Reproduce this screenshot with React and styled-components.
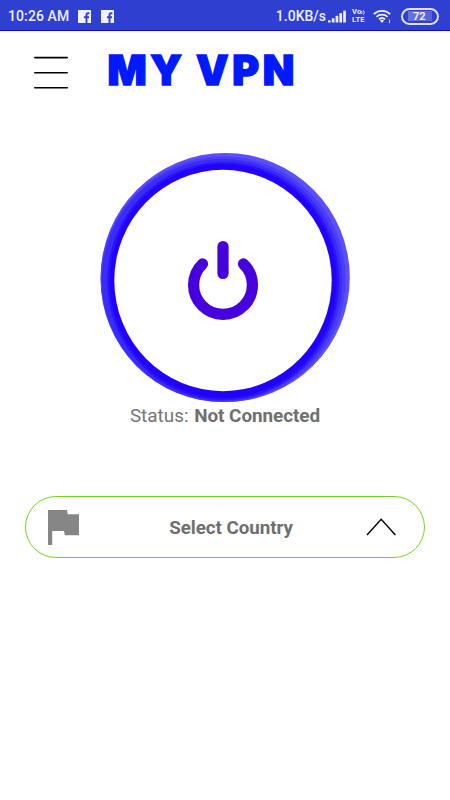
import React from "react";
import styled, { createGlobalStyle } from "styled-components";

const GlobalStyle = createGlobalStyle`
  * {
    box-sizing: border-box;
  }
  body {
    margin: 0;
    background: #fff;
    font-family: Roboto, "Liberation Sans", sans-serif;
  }
`;

const FacebookIcon = () => (
  <svg width="13" height="13" viewBox="0 0 13 13">
    <rect width="13" height="13" rx="0.6" fill="#f1f2fd" />
    <path
      d="M11.4 3.2H10c-1 0-1.5.6-1.5 1.6V13M6 7.2h5"
      fill="none"
      stroke="#2f3fd0"
      strokeWidth="1.9"
    />
  </svg>
);

const SignalIcon = () => (
  <svg width="18" height="13" viewBox="0 0 18 13" fill="#eceefd">
    <rect x="0" y="10.3" width="2.6" height="2.2" />
    <rect x="3.8" y="8.3" width="2.7" height="4.2" />
    <rect x="7.6" y="5.8" width="2.7" height="6.7" />
    <rect x="11.4" y="3.2" width="2.7" height="9.3" />
    <rect x="15.2" y="0.6" width="2.7" height="11.9" />
  </svg>
);

const VolteWave = () => (
  <svg width="4" height="5" viewBox="0 0 4 5">
    <path
      d="M0.5 1q1 1.5 0 3M2.4 0.3q1.6 2.2 0 4.4"
      fill="none"
      stroke="#eceefd"
      strokeWidth="0.9"
    />
  </svg>
);

const WifiIcon = () => (
  <svg width="19" height="15" viewBox="0 0 19 15">
    <g fill="none" stroke="#eceefd" strokeWidth="1.8">
      <path d="M0.8 5.2a12 12 0 0 1 16.4 0" />
      <path d="M3.4 7.8a8.4 8.4 0 0 1 11.2 0" />
      <path d="M5.9 10.3a4.8 4.8 0 0 1 6.2 0" />
    </g>
    <path d="M6.9 11.6a3.4 3.4 0 0 1 4.2 0L9 14z" fill="#eceefd" />
    <path d="M16.5 10.5v3.8" stroke="#b9bff2" strokeWidth="1.2" />
  </svg>
);

const MenuIcon = () => (
  <svg width="34" height="33" viewBox="0 0 34 33">
    <path
      d="M0.8 1.6h32.4M0.8 16.7h32.4M0.8 31.8h32.4"
      stroke="#000"
      strokeWidth="1.6"
      strokeLinecap="round"
    />
  </svg>
);

const PowerButton = () => (
  <svg width="250" height="250" viewBox="100 151.5 250 250" overflow="visible">
    <circle cx="225.2" cy="277" r="124.6" fill="#5b50fb" />
    <ellipse cx="223.2" cy="278.8" rx="122.6" ry="122.8" fill="#4a3efa" />
    <ellipse cx="222" cy="279.6" rx="120.2" ry="121.2" fill="#3a2cf8" />
    <ellipse cx="223.2" cy="280.5" rx="116" ry="119" fill="#2a12fa" />
    <ellipse cx="223.2" cy="280.5" rx="113.5" ry="117" fill="#2200ff" />
    <ellipse cx="223" cy="280" rx="108.7" ry="110.7" fill="#fff" />
    <g fill="none" stroke="#4600de" strokeWidth="11.2" strokeLinecap="round">
      <path d="M223 246v27" />
      <path d="M202.5 263.4a29.4 29.4 0 1 0 41 0" />
    </g>
  </svg>
);

const App = () => {
  return (
    <>
      <GlobalStyle />
      <StatusBar>
        <Clock>10:26 AM</Clock>
        <Notifications>
          <FacebookIcon />
          <FacebookIcon />
        </Notifications>
        <Speed>1.0KB/s</Speed>
        <SignalIcon />
        <Volte>
          <VolteRow>
            Vo
            <VolteWave />
          </VolteRow>
          <VolteRow>LTE</VolteRow>
        </Volte>
        <WifiIcon />
        <Battery>
          <Charge>72</Charge>
        </Battery>
      </StatusBar>
      <Header>
        <MenuButton aria-label="Menu">
          <MenuIcon />
        </MenuButton>
        <Title>MY VPN</Title>
      </Header>
      <Main>
        <PowerButton />
        <Status>
          Status: <strong>Not Connected</strong>
        </Status>
        <CountryButton>
          <svg width="31.6" height="35.8" viewBox="5 4 15 17">
            <path d="M14.4 6L14 4H5v17h2v-7h5.6l.4 2h7V6z" fill="#868686" />
          </svg>
          <CountryLabel>Select Country</CountryLabel>
          <svg width="30" height="20" viewBox="0 0 30 20">
            <path
              d="M1 17L15.2 1.4L29.4 17"
              fill="none"
              stroke="#000"
              strokeWidth="1.4"
            />
          </svg>
        </CountryButton>
      </Main>
    </>
  );
};

export default App;

const StatusBar = styled.div`
  display: flex;
  align-items: center;
  height: 31px;
  padding: 2px 11px 0 8px;
  background: #2f3fd0;
  border-bottom: 1px solid #0a10c8;
  color: #eceefd;
`;

const Clock = styled.span`
  width: 70px;
  font-size: 14px;
  font-weight: 500;
  letter-spacing: 0.1px;
  white-space: nowrap;
`;

const Notifications = styled.div`
  display: flex;
  gap: 10px;
  flex: 1;
`;

const Speed = styled.span`
  margin-right: 2px;
  font-size: 14px;
  font-weight: 500;
`;

const Volte = styled.div`
  display: flex;
  flex-direction: column;
  width: 15px;
  margin: 0 6px;
  font-size: 7.6px;
  font-weight: 700;
`;

const VolteRow = styled.span`
  display: flex;
  align-items: center;
  height: 8px;
  line-height: 8px;
  letter-spacing: 0.2px;
`;

const Battery = styled.div`
  display: flex;
  align-items: center;
  justify-content: center;
  width: 38px;
  height: 17px;
  margin-left: 9px;
  border: 2px solid #dfe2fb;
  border-radius: 9px;
`;

const Charge = styled.span`
  width: 24px;
  height: 10px;
  padding-left: 5px;
  background: linear-gradient(90deg, #6974dd, #5663d9);
  font-size: 11px;
  font-weight: 700;
  line-height: 11px;
`;

const Header = styled.header`
  display: flex;
  align-items: flex-start;
  height: 121px;
  padding: 25px 34px 0;
`;

const MenuButton = styled.button`
  display: flex;
  margin: 0;
  padding: 0;
  border: 0;
  background: none;
`;

const Title = styled.h1`
  margin: -2px 0 0 39.5px;
  color: #0019ff;
  font-family: Inter, "Liberation Sans", sans-serif;
  font-size: 41px;
  font-weight: 900;
  font-kerning: none;
  letter-spacing: 3.6px;
  line-height: 32px;
  word-spacing: -1.5px;
  white-space: nowrap;
  -webkit-text-stroke: 1.4px #0019ff;
`;

const Main = styled.main`
  display: flex;
  flex-direction: column;
  align-items: center;
`;

const Status = styled.p`
  margin: 2px 0 0;
  color: #757575;
  font-size: 18.9px;
  line-height: 24px;

  strong {
    margin-left: 1px;
    font-weight: 700;
    letter-spacing: -0.05px;
    color: #6f6f6f;
  }
`;

const CountryButton = styled.button`
  display: flex;
  align-items: center;
  width: 400px;
  height: 62px;
  margin: 68px 0 0;
  padding: 1px 28px 0 21.6px;
  border: 1.3px solid #76d41c;
  border-radius: 31px;
  background: #fff;
  font-family: inherit;
`;

const CountryLabel = styled.span`
  flex: 1;
  padding-left: 17px;
  color: #6f6f6f;
  font-size: 18.8px;
  font-weight: 700;
  letter-spacing: -0.05px;
  line-height: 22px;
  text-align: center;
`;
